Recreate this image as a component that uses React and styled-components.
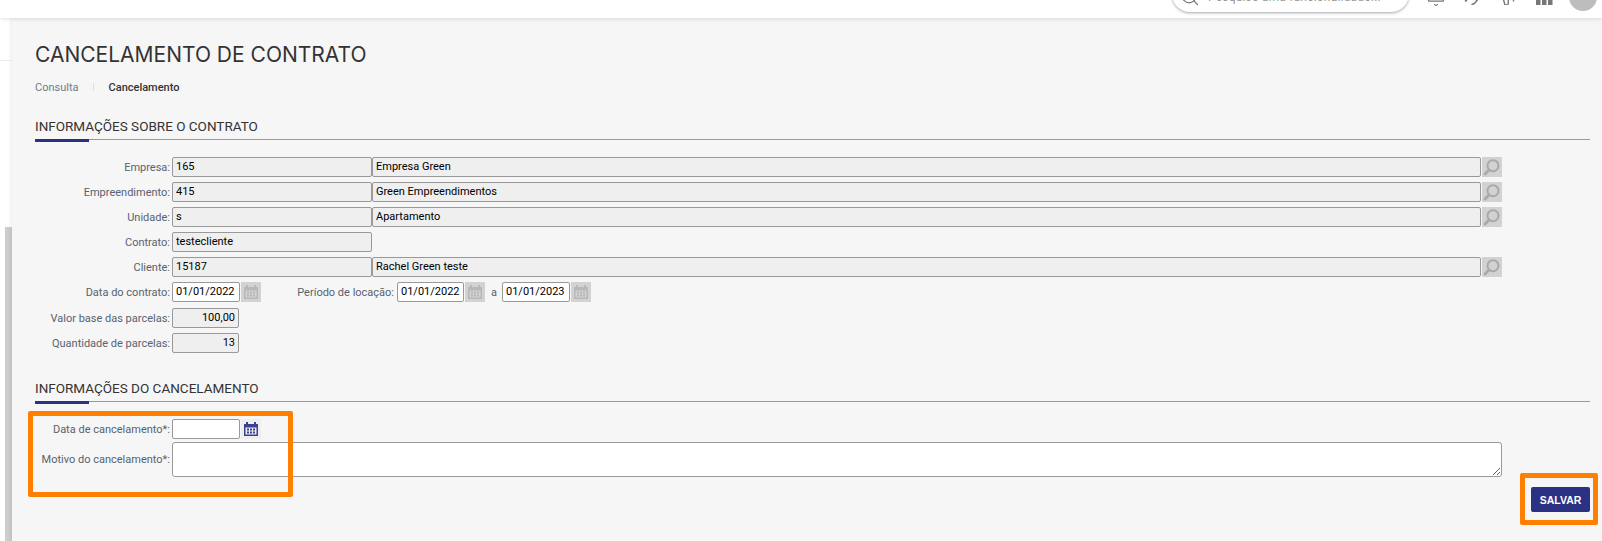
import React from "react";
import styled, { createGlobalStyle } from "styled-components";
import { Bell, Search } from "lucide-react";

const GlobalStyle = createGlobalStyle`
  html, body {
    margin: 0;
    padding: 0;
    height: 100%;
    overflow: hidden;
    background: #f6f6f6;
    font-family: Roboto, Arial, sans-serif;
  }
`;

const Page = styled.div`
  display: flex;
  flex-direction: column;
  height: 541px;
`;

const Header = styled.header`
  position: relative;
  z-index: 2;
  height: 18px;
  flex: none;
  box-sizing: border-box;
  padding: 0 5px 6px 0;
  display: flex;
  justify-content: flex-end;
  align-items: flex-end;
  background: #fff;
  box-shadow: 0 1px 4px rgba(0, 0, 0, 0.12);
`;

const SearchPill = styled.div`
  width: 237px;
  height: 36px;
  flex: none;
  box-sizing: border-box;
  padding: 0 10px 5px 8px;
  display: flex;
  align-items: flex-end;
  gap: 8px;
  border-radius: 18px;
  background: #fff;
  box-shadow: 0 1px 3px rgba(0, 0, 0, 0.35);
  color: #777;
  white-space: nowrap;
`;

const PillText = styled.span`
  margin-bottom: 3px;
  font-size: 12px;
  line-height: 14px;
  letter-spacing: 0.2px;
  color: #999;
`;

const IconSlot = styled.div`
  width: 20px;
  height: 20px;
  flex: none;
  margin-left: ${(props) => props.$gap}px;
  margin-bottom: 7px;
  color: #777;
  svg {
    display: block;
  }
`;

const BellSlot = styled(IconSlot)`
  margin-bottom: 5px;
`;

const Avatar = styled.div`
  width: 28px;
  height: 28px;
  flex: none;
  margin-left: 15px;
  margin-bottom: 1px;
  border-radius: 50%;
  background: #bdbdbd;
`;

const Body = styled.div`
  flex: 1;
  display: flex;
  min-height: 0;
`;

const Rail = styled.aside`
  width: 12px;
  flex: none;
  display: flex;
  flex-direction: column;
  background: #fff;
`;

const RailItem = styled.div`
  height: 42px;
  flex: none;
  border-bottom: 1px solid #eee;
`;

const RailThumb = styled.div`
  flex: 1;
  margin: 166px 0 0 5px;
  background: #cdcdcd;
`;

const Main = styled.main`
  flex: 1;
  min-width: 0;
  padding: 23px 12px 0 23px;
  background: #f6f6f6;
  box-shadow: -2px 0 3px rgba(0, 0, 0, 0.06);
`;

const Title = styled.h1`
  margin: 0;
  font-family: Inter, sans-serif;
  font-size: 21px;
  line-height: 28px;
  font-weight: 400;
  color: #333;
`;

const Breadcrumb = styled.nav`
  margin-top: 11px;
  display: flex;
  align-items: center;
  height: 14px;
  font-size: 11px;
`;

const Crumb = styled.span`
  color: ${(props) => (props.$active ? "#333" : "#6f7c88")};
  font-weight: ${(props) => (props.$active ? 500 : 400)};
`;

const CrumbDivider = styled.span`
  width: 1px;
  height: 8px;
  margin: 0 15px 0 14px;
  background: #ddd;
`;

const SectionTitle = styled.h2`
  position: relative;
  margin: ${(props) => props.$top}px 0 17px;
  height: 21px;
  box-sizing: content-box;
  border-bottom: 1px solid #999;
  font-size: 13.5px;
  line-height: 17px;
  font-weight: 400;
  color: #333;

  &::after {
    content: "";
    position: absolute;
    left: 0;
    top: 21px;
    width: 54px;
    height: 3px;
    background: #2b3183;
  }
`;

const Form = styled.div`
  padding-right: 88px;
`;

const Row = styled.div`
  display: flex;
  align-items: center;
  height: 20px;
  margin-bottom: ${(props) => props.$gap ?? 5}px;
`;

const TallRow = styled(Row)`
  height: 35px;
  margin-bottom: 0;
`;

const Label = styled.label`
  flex: none;
  width: ${(props) => props.$width || 135}px;
  margin-right: ${(props) => props.$right ?? 2}px;
  text-align: right;
  font-size: 11px;
  color: #58626e;
  white-space: nowrap;
`;

const Field = styled.input`
  box-sizing: border-box;
  height: 20px;
  width: ${(props) => (props.$width ? props.$width + "px" : "auto")};
  flex: ${(props) => (props.$width ? "none" : "1")};
  min-width: 0;
  padding: 0 3px 1px;
  border: 1px solid #999;
  border-radius: 2px;
  outline: none;
  background: ${(props) => (props.$on ? "#fff" : "#efefef")};
  color: #000;
  font-family: Roboto, Arial, sans-serif;
  font-size: 11px;
  text-align: ${(props) => (props.$right ? "right" : "left")};
`;

const NoteArea = styled.textarea`
  flex: 1;
  box-sizing: border-box;
  height: 35px;
  min-width: 0;
  padding: 3px;
  border: 1px solid #999;
  border-radius: 3px;
  outline: none;
  background: #fff;
`;

const IconBox = styled.span`
  width: 20px;
  height: 20px;
  flex: none;
  margin-left: 1px;
  display: flex;
  align-items: center;
  justify-content: center;
  background: ${(props) => (props.$on ? "#eeeeee" : "#d2d2d2")};
  color: ${(props) => (props.$on ? "#3a4094" : "#b8b8b8")};
`;

const LookupBox = styled(IconBox)`
  color: #a9a9a9;
`;

const Connector = styled.span`
  width: 12px;
  margin: 0 2px 0 3px;
  font-size: 11px;
  color: #58626e;
  text-align: center;
`;

const Actions = styled.div`
  display: flex;
  justify-content: flex-end;
  margin-top: 10px;
`;

const SaveButton = styled.button`
  width: 59px;
  height: 25px;
  padding: 0;
  border: none;
  border-radius: 2px;
  background: #2b3183;
  color: #fff;
  font-family: "Liberation Sans", Arial, sans-serif;
  font-size: 10.5px;
  font-weight: 700;
`;

const Callout = styled.div`
  position: absolute;
  left: ${(props) => props.$x}px;
  top: ${(props) => props.$y}px;
  width: ${(props) => props.$w}px;
  height: ${(props) => props.$h}px;
  box-sizing: border-box;
  border: 5px solid #ff8000;
  border-radius: 2px;
  pointer-events: none;
`;

const CalendarIcon = () => (
  <svg width="16" height="16" viewBox="0 0 16 16" fill="currentColor">
    <path d="M1 3h2V1h2v2h6V1h2v2h2v12H1z M2.5 6.5v7h11v-7z" fillRule="evenodd" />
    <rect x="4" y="7.5" width="2" height="2" />
    <rect x="7" y="7.5" width="2" height="2" />
    <rect x="10" y="7.5" width="2" height="2" />
    <rect x="4" y="10.5" width="2" height="2" />
    <rect x="7" y="10.5" width="2" height="2" />
    <rect x="10" y="10.5" width="2" height="2" />
  </svg>
);

const LookupIcon = () => (
  <svg width="20" height="20" viewBox="0 0 20 20" fill="none" stroke="currentColor">
    <circle cx="11" cy="8.7" r="5.5" strokeWidth="2" />
    <path d="M7 13L3 17" strokeWidth="2.8" strokeLinecap="round" />
  </svg>
);

// the page is scrolled, only the lower end of these header icons still shows
const HelpIcon = () => (
  <svg width="20" height="20" viewBox="0 0 20 20" fill="none" stroke="currentColor" strokeWidth="1.6">
    <circle cx="4" cy="15.5" r="1.2" fill="currentColor" stroke="none" />
    <path d="M16 14L13 18L9.5 20" />
  </svg>
);

const PointerIcon = () => (
  <svg width="20" height="20" viewBox="0 0 20 20" fill="none" stroke="currentColor" strokeWidth="1.4">
    <path d="M5 13L7 20H10L10.5 13" />
    <path d="M15.5 14V16.5" />
  </svg>
);

const GridIcon = () => (
  <svg width="20" height="20" viewBox="0 0 20 20" fill="currentColor">
    {[2, 8, 14].map((x) =>
      [2.5, 8.5, 15].map((y) => <rect key={`${x}-${y}`} x={x} y={y} width="4.5" height="5" />)
    )}
  </svg>
);

const Lookup = () => (
  <LookupBox>
    <LookupIcon />
  </LookupBox>
);

const Calendar = ({ on }) => (
  <IconBox $on={on}>
    <CalendarIcon />
  </IconBox>
);

const App = () => {
  return (
    <Page>
      <GlobalStyle />
      <Header>
        <SearchPill>
          <Search size={20} strokeWidth={1.5} />
          <PillText>Pesquise uma funcionalidade...</PillText>
        </SearchPill>
        <BellSlot $gap={17}>
          <Bell size={20} strokeWidth={1.5} />
        </BellSlot>
        <IconSlot $gap={16}>
          <HelpIcon />
        </IconSlot>
        <IconSlot $gap={16}>
          <PointerIcon />
        </IconSlot>
        <IconSlot $gap={16}>
          <GridIcon />
        </IconSlot>
        <Avatar />
      </Header>
      <Body>
        <Rail>
          <RailItem />
          <RailThumb />
        </Rail>
        <Main>
          <Title>CANCELAMENTO DE CONTRATO</Title>
          <Breadcrumb>
            <Crumb>Consulta</Crumb>
            <CrumbDivider />
            <Crumb $active>Cancelamento</Crumb>
          </Breadcrumb>

          <SectionTitle $top={24}>INFORMAÇÕES SOBRE O CONTRATO</SectionTitle>
          <Form>
            <Row>
              <Label>Empresa:</Label>
              <Field $width={200} value="165" readOnly />
              <Field value="Empresa Green" readOnly />
              <Lookup />
            </Row>
            <Row>
              <Label>Empreendimento:</Label>
              <Field $width={200} value="415" readOnly />
              <Field value="Green Empreendimentos" readOnly />
              <Lookup />
            </Row>
            <Row>
              <Label>Unidade:</Label>
              <Field $width={200} value="s" readOnly />
              <Field value="Apartamento" readOnly />
              <Lookup />
            </Row>
            <Row>
              <Label>Contrato:</Label>
              <Field $width={200} value="testecliente" readOnly />
            </Row>
            <Row>
              <Label>Cliente:</Label>
              <Field $width={200} value="15187" readOnly />
              <Field value="Rachel Green teste" readOnly />
              <Lookup />
            </Row>
            <Row $gap={6}>
              <Label>Data do contrato:</Label>
              <Field $width={68} value="01/01/2022" $on readOnly />
              <Calendar />
              <Label $width={133} $right={3}>Período de locação:</Label>
              <Field $width={67} value="01/01/2022" $on readOnly />
              <Calendar />
              <Connector>a</Connector>
              <Field $width={68} value="01/01/2023" $on readOnly />
              <Calendar />
            </Row>
            <Row>
              <Label>Valor base das parcelas:</Label>
              <Field $width={67} value="100,00" $right readOnly />
            </Row>
            <Row>
              <Label>Quantidade de parcelas:</Label>
              <Field $width={67} value="13" $right readOnly />
            </Row>
          </Form>

          <SectionTitle $top={27}>INFORMAÇÕES DO CANCELAMENTO</SectionTitle>
          <Form>
            <Row $gap={3}>
              <Label>Data de cancelamento*:</Label>
              <Field $width={68} $on />
              <Calendar on />
            </Row>
            <TallRow>
              <Label>Motivo do cancelamento*:</Label>
              <NoteArea />
            </TallRow>
          </Form>
          <Actions>
            <SaveButton>SALVAR</SaveButton>
          </Actions>
        </Main>
      </Body>
      <Callout $x={28} $y={411} $w={265} $h={86} />
      <Callout $x={1520} $y={473} $w={78} $h={52} />
    </Page>
  );
};

export default App;
